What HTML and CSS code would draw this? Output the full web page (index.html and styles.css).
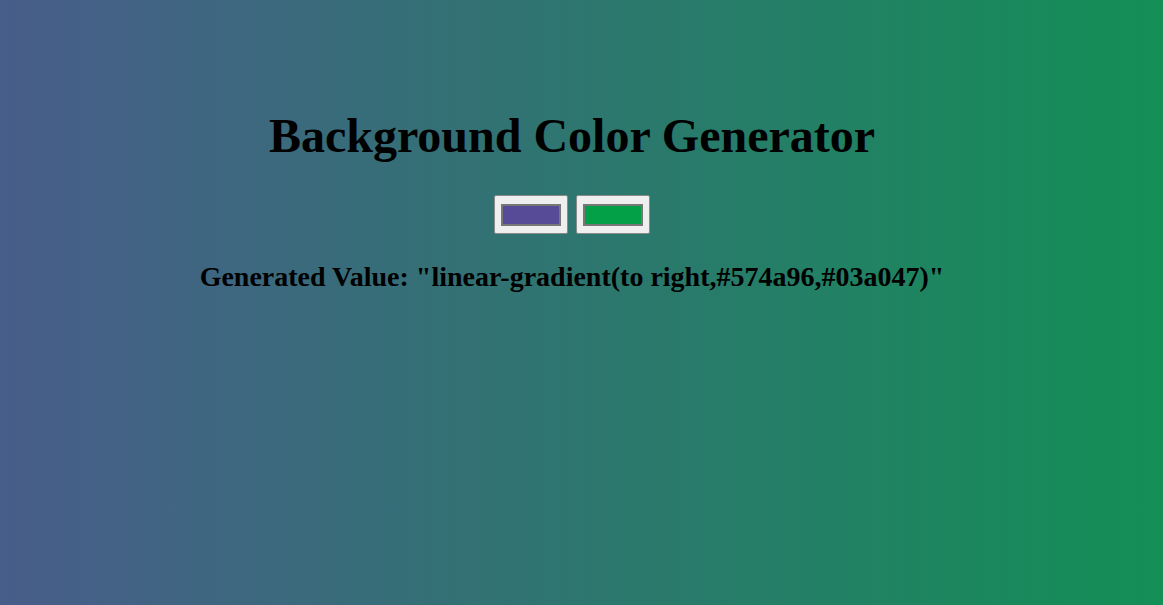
FILE: index.html
```html
<!DOCTYPE html>
<html>
<head>
<meta charset="utf-8">
<link rel="stylesheet" href="styles.css">
</head>
<body class="page">
  <h1 class="title">Background Color Generator</h1>
  <div class="pickers">
    <div class="picker"><span class="swatch swatch-purple"></span></div>
    <div class="picker"><span class="swatch swatch-green"></span></div>
  </div>
  <h3 class="value">Generated Value: "linear-gradient(to right,#574a96,#03a047)"</h3>
</body>
</html>
```
FILE: styles.css
```css
html, body {
  height: 100%;
}
.page {
  margin: 0;
  padding: 108px 19px 0 0;
  box-sizing: border-box;
  background: linear-gradient(to right, #485d8a, #138f55);
  font-family: "Liberation Serif", "Times New Roman", serif;
  color: #000;
  text-align: center;
}
.title {
  font-size: 48px;
  font-weight: bold;
  margin: 0;
}
.pickers {
  display: flex;
  justify-content: center;
  gap: 8px;
  margin-top: 32px;
}
.picker {
  width: 74px;
  height: 39px;
  box-sizing: border-box;
  border: 1px solid #8a8a8a;
  border-radius: 2px;
  background: #efefef;
  display: flex;
  align-items: center;
  justify-content: center;
}
.swatch {
  display: block;
  width: 60px;
  height: 22px;
  box-sizing: border-box;
  border: 2px solid #777;
}
.swatch-purple {
  background: #574a96;
}
.swatch-green {
  background: #03a047;
}
.value {
  font-size: 28px;
  font-weight: bold;
  margin: 27px 0 0;
}
```
